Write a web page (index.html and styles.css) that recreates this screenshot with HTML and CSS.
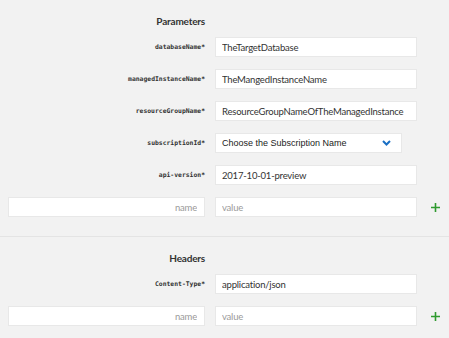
FILE: index.html
```html
<!DOCTYPE html>
<html>
    <head>
        <title>Parameters</title>
        <meta charset="UTF-8">
        <link rel="stylesheet" href="styles.css">
    </head>
    <body>
        <section class="group params">
            <h2>Parameters</h2>
            <div class="fields">
                <label>databaseName*</label>
                <input type="text" value="TheTargetDatabase"/>
                <span></span>
                <label>managedInstanceName*</label>
                <input type="text" value="TheMangedInstanceName"/>
                <span></span>
                <label>resourceGroupName*</label>
                <input type="text" value="ResourceGroupNameOfTheManagedInstance"/>
                <span></span>
                <label>subscriptionId*</label>
                <div class="select">
                    <span>Choose the Subscription Name</span>
                    <svg width="9" height="6" viewBox="0 0 9 6"><path d="M1 1 L4.5 4.5 L8 1" fill="none" stroke="#1a6fc4" stroke-width="2"/></svg>
                </div>
                <span></span>
                <label>api-version*</label>
                <input type="text" value="2017-10-01-preview"/>
                <span></span>
                <input class="name" type="text" placeholder="name"/>
                <input type="text" placeholder="value"/>
                <a class="add" href="#"><svg width="9" height="9" viewBox="0 0 9 9"><path d="M4.5 0 V9 M0 4.5 H9" stroke="#2f9a2f" stroke-width="1.6"/></svg></a>
            </div>
        </section>
        <section class="group headers">
            <h2>Headers</h2>
            <div class="fields">
                <label>Content-Type*</label>
                <input type="text" value="application/json"/>
                <span></span>
                <input class="name" type="text" placeholder="name"/>
                <input type="text" placeholder="value"/>
                <a class="add" href="#"><svg width="9" height="9" viewBox="0 0 9 9"><path d="M4.5 0 V9 M0 4.5 H9" stroke="#2f9a2f" stroke-width="1.6"/></svg></a>
            </div>
        </section>
    </body>
</html>
```
FILE: styles.css
```css
body {
    margin: 0;
    background-color: #f2f2f2;
    font-family: Lato, sans-serif;
    color: #333;
}
section.group {
    padding: 14px 0 19px 8px;
}
section.params {
    border-bottom: 1px solid #e4e4e4;
}
h2 {
    width: 197px;
    margin: 0 0 9px;
    font-size: 10px;
    line-height: 14px;
    font-weight: 700;
    letter-spacing: -0.2px;
    text-align: right;
}
div.fields {
    display: grid;
    grid-template-columns: 197px 202px 30px;
    column-gap: 10px;
    row-gap: 12px;
    align-items: center;
}
label {
    font-family: "DejaVu Sans Mono", monospace;
    font-weight: bold;
    font-size: 6.4px;
    color: #333;
    text-align: right;
}
input, div.select {
    box-sizing: border-box;
    height: 20px;
    margin: 0;
    padding: 0 6px;
    border: 1px solid #e8e8e8;
    background: white;
    font-family: Lato, sans-serif;
    font-size: 9.5px;
    letter-spacing: -0.2px;
    color: #333;
    outline: none;
}
input::placeholder {
    color: #9a9a9a;
}
input.name {
    text-align: right;
    padding-right: 7px;
}
div.select {
    width: 187px;
    display: flex;
    align-items: center;
    justify-content: space-between;
    padding-right: 10px;
    font-family: "Liberation Sans", Arial, sans-serif;
    font-size: 9px;
    letter-spacing: 0;
    color: #222;
}
a.add {
    display: flex;
    padding-left: 4px;
}
```
